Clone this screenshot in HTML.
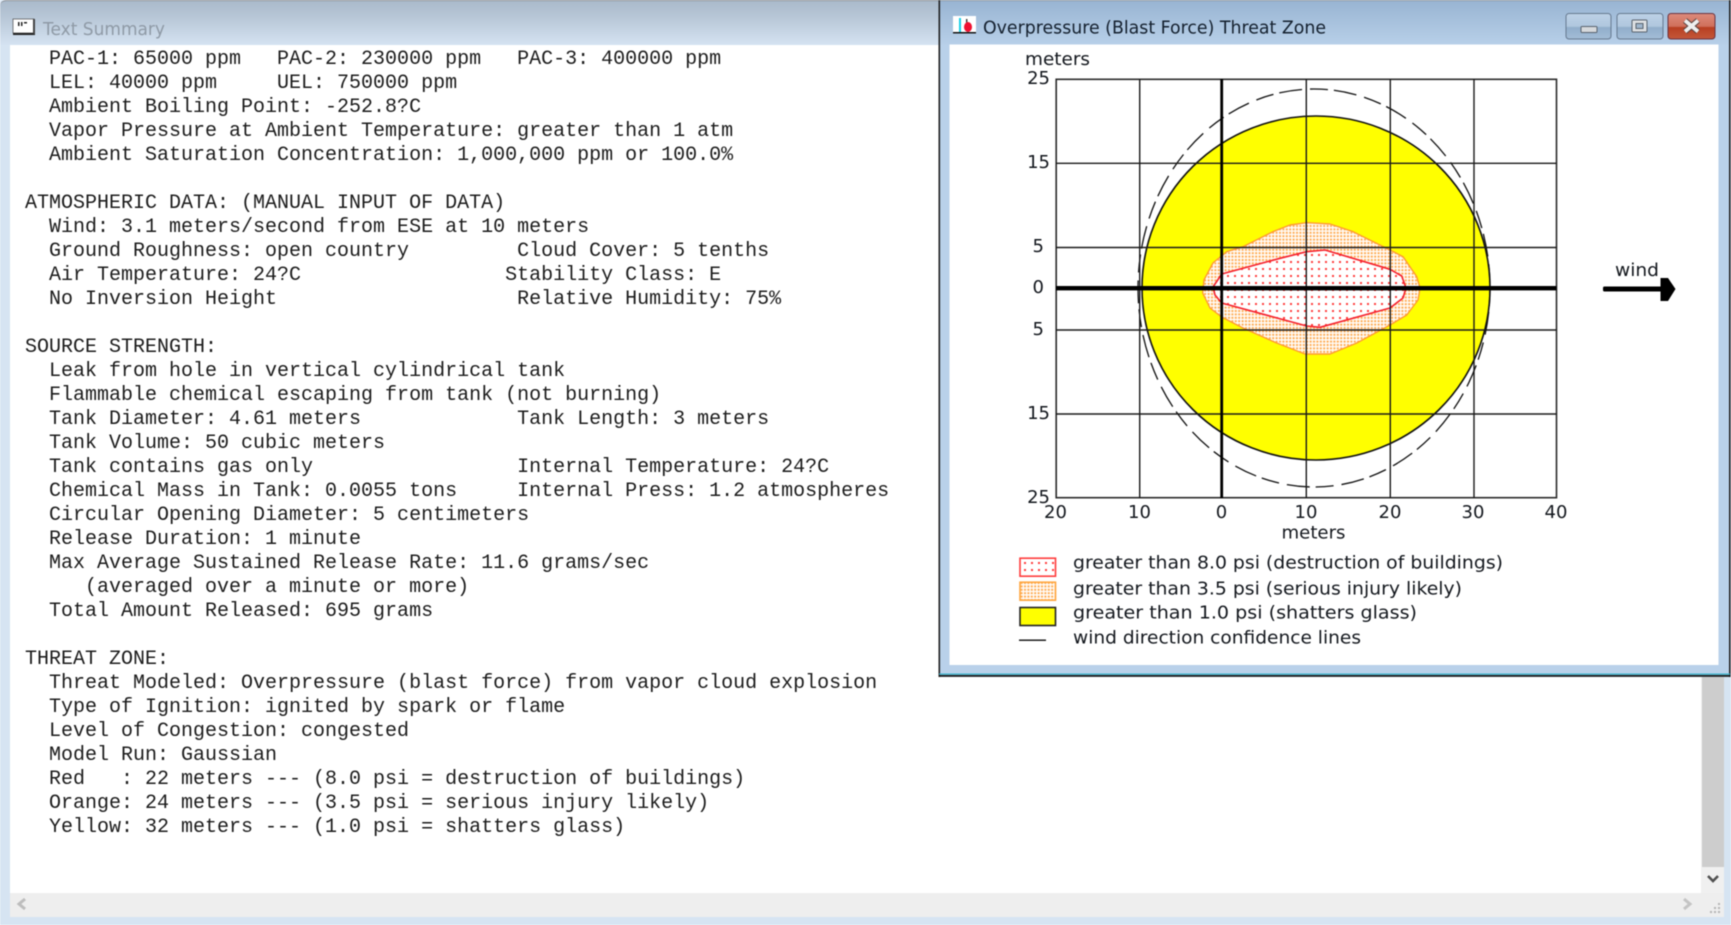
<!DOCTYPE html>
<html>
<head>
<meta charset="utf-8">
<title>Overpressure Threat Zone</title>
<style>
html,body{margin:0;padding:0;background:#fff}
#root{position:relative;width:1731px;height:925px;overflow:hidden;background:#d6e4f2;filter:blur(.45px)}
.abs{position:absolute}
#lt{left:0;top:0;width:945px;height:45px;background:linear-gradient(#aabacb 0,#b9c8d8 40%,#d5e3f2 100%);border-top:1px solid #8a8f95;box-sizing:border-box;border-top-left-radius:6px}
#client{left:10px;top:45px;width:1691px;height:848px;background:#fff}
pre{position:absolute;left:25px;top:47.7px;margin:0;font:20px/24px "Liberation Mono",monospace;color:#1c1c1c}
#hs{left:10px;top:893px;width:1714px;height:24px;background:#eeeeee}
#vs{left:1701px;top:677px;width:23px;height:216px;background:#f0f0f0}
#thumb{left:1702px;top:677px;width:22px;height:190px;background:#cdcdcd}
</style>
</head>
<body>
<div id="root">
  <div class="abs" id="lt"></div>
  <div class="abs" id="client"></div>
  <pre>  PAC-1: 65000 ppm   PAC-2: 230000 ppm   PAC-3: 400000 ppm
  LEL: 40000 ppm     UEL: 750000 ppm
  Ambient Boiling Point: -252.8?C
  Vapor Pressure at Ambient Temperature: greater than 1 atm
  Ambient Saturation Concentration: 1,000,000 ppm or 100.0%

ATMOSPHERIC DATA: (MANUAL INPUT OF DATA)
  Wind: 3.1 meters/second from ESE at 10 meters
  Ground Roughness: open country         Cloud Cover: 5 tenths
  Air Temperature: 24?C                 Stability Class: E
  No Inversion Height                    Relative Humidity: 75%

SOURCE STRENGTH:
  Leak from hole in vertical cylindrical tank
  Flammable chemical escaping from tank (not burning)
  Tank Diameter: 4.61 meters             Tank Length: 3 meters
  Tank Volume: 50 cubic meters
  Tank contains gas only                 Internal Temperature: 24?C
  Chemical Mass in Tank: 0.0055 tons     Internal Press: 1.2 atmospheres
  Circular Opening Diameter: 5 centimeters
  Release Duration: 1 minute
  Max Average Sustained Release Rate: 11.6 grams/sec
     (averaged over a minute or more)
  Total Amount Released: 695 grams

THREAT ZONE:
  Threat Modeled: Overpressure (blast force) from vapor cloud explosion
  Type of Ignition: ignited by spark or flame
  Level of Congestion: congested
  Model Run: Gaussian
  Red   : 22 meters --- (8.0 psi = destruction of buildings)
  Orange: 24 meters --- (3.5 psi = serious injury likely)
  Yellow: 32 meters --- (1.0 psi = shatters glass)</pre>
  <div class="abs" id="hs"></div>
  <div class="abs" id="vs"></div>
  <div class="abs" id="thumb"></div>

  <svg class="abs" style="left:0;top:0" width="1731" height="925" viewBox="0 0 1731 925" xmlns="http://www.w3.org/2000/svg">
    <defs>
      <linearGradient id="tb" x1="0" y1="0" x2="0" y2="1"><stop offset="0" stop-color="#98b4d2"/><stop offset="1" stop-color="#b8d0e9"/></linearGradient>
      <linearGradient id="bn" x1="0" y1="0" x2="0" y2="1"><stop offset="0" stop-color="#bdd1e6"/><stop offset=".5" stop-color="#b0c7de"/><stop offset=".55" stop-color="#91aecb"/><stop offset="1" stop-color="#a3bdd7"/></linearGradient>
      <linearGradient id="cl" x1="0" y1="0" x2="0" y2="1"><stop offset="0" stop-color="#dc8a7c"/><stop offset=".5" stop-color="#d0705c"/><stop offset=".55" stop-color="#b83f22"/><stop offset="1" stop-color="#c4573a"/></linearGradient>
      <pattern id="pr" patternUnits="userSpaceOnUse" width="7" height="7"><rect width="7" height="7" fill="#fff"/><rect x="2" y="2" width="2" height="2" fill="#ff3c3c"/></pattern>
      <pattern id="po" patternUnits="userSpaceOnUse" width="3.4" height="3.4"><rect width="3.4" height="3.4" fill="#fff"/><rect x=".6" y=".6" width="2" height="2" fill="#ffa94d"/></pattern>
    </defs>

    <!-- left window bits -->
    <g>
      <rect x="13" y="19" width="21" height="14" fill="#fff" stroke="#333" stroke-width=".6"/>
      <rect x="13" y="33" width="22" height="2" fill="#222"/>
      <rect x="33" y="19" width="2" height="15" fill="#444"/>
      <rect x="18" y="22" width="1.5" height="4" fill="#222"/><rect x="21" y="22" width="1.5" height="4" fill="#222"/><rect x="24" y="22" width="3" height="1.5" fill="#222"/>
      <text x="43" y="35" font-family="'DejaVu Sans',sans-serif" font-size="18" fill="#8f9aa6" textLength="122" lengthAdjust="spacingAndGlyphs">Text Summary</text>
    </g>
    <!-- scrollbar glyphs -->
    <path d="M25 899l-6 5 6 5" fill="none" stroke="#bdbdbd" stroke-width="3"/>
    <path d="M1684 899l6 5-6 5" fill="none" stroke="#c4c4c4" stroke-width="3"/>
    <path d="M1708 876l5 5 5-5" fill="none" stroke="#505050" stroke-width="2.6"/>
    <g fill="#b4b4b4"><rect x="1718" y="903" width="2" height="2"/><rect x="1714" y="907" width="2" height="2"/><rect x="1718" y="907" width="2" height="2"/><rect x="1710" y="911" width="2" height="2"/><rect x="1714" y="911" width="2" height="2"/><rect x="1718" y="911" width="2" height="2"/></g>

    <!-- right window frame -->
    <rect x="939" y="0" width="792" height="677" fill="#b9d1ea"/>
    <rect x="939" y="0" width="792" height="45" fill="url(#tb)"/>
    <rect x="939" y="0" width="792" height="1" fill="#8b96a1"/>
    <rect x="938.5" y="0" width="1.6" height="677" fill="#222"/>
    <rect x="1729" y="0" width="1.6" height="677" fill="#222"/>
    <rect x="939" y="673.5" width="791" height="1.2" fill="#33b0c8"/>
    <rect x="939" y="675" width="791" height="1.8" fill="#1a1a1a"/>
    <rect x="949.5" y="44.5" width="769" height="620.5" fill="#fff"/>

    <!-- title -->
    <rect x="953" y="16" width="23" height="16" fill="#fff"/>
    <rect x="953" y="32" width="23" height="1.5" fill="#111"/>
    <rect x="959" y="18" width="2" height="14" fill="#18d0e8"/>
    <rect x="966" y="19" width="1.4" height="6" fill="#333"/>
    <ellipse cx="968" cy="27" rx="4" ry="5" fill="#f01030"/>
    <text x="983" y="33.5" font-family="'DejaVu Sans',sans-serif" font-size="18" fill="#14202e" textLength="343" lengthAdjust="spacingAndGlyphs">Overpressure (Blast Force) Threat Zone</text>

    <!-- buttons -->
    <rect x="1566" y="13.5" width="45" height="25.5" rx="3" fill="url(#bn)" stroke="#66798f" stroke-width="1"/>
    <rect x="1581" y="26.5" width="16" height="6" rx="1" fill="#d6d9dc" stroke="#59636e" stroke-width="1"/>
    <rect x="1617" y="13.5" width="46" height="25.5" rx="3" fill="url(#bn)" stroke="#66798f" stroke-width="1"/>
    <rect x="1632" y="20" width="15" height="12" rx="1" fill="#dde0e3" stroke="#59636e" stroke-width="1"/>
    <rect x="1636" y="23.5" width="7" height="5" fill="#9fb6cd" stroke="#59636e" stroke-width="1"/>
    <rect x="1668" y="13.5" width="47" height="25.5" rx="3" fill="url(#cl)" stroke="#6b3340" stroke-width="1"/>
    <path d="M1685 20.5l13 11M1698 20.5l-13 11" stroke="#59423f" stroke-width="6"/>
    <path d="M1685 20.5l13 11M1698 20.5l-13 11" stroke="#eeeeee" stroke-width="3.8"/>

    <!-- plot -->
    <ellipse cx="1316" cy="288" rx="174" ry="172" fill="#ffff00" stroke="#111" stroke-width="1.6"/>
    <ellipse cx="1314" cy="288" rx="176" ry="199" fill="none" stroke="#111" stroke-width="1.3" stroke-dasharray="18 6 23 8"/>
    <path d="M1306.7 222.7L1330 224 1353 231.7 1390 250 1403 256.7 1416.7 276.7 1420 288 1418 300 1406.7 315 1390 325 1356.7 343 1330 354 1305 354 1276.7 343 1243 328 1221.7 317 1210 308 1202.7 293 1204 280 1213 263 1226.7 251.7 1243 246.7 1273 231.7 1290 225Z" fill="url(#po)" stroke="#ff9a30" stroke-width="1.4" stroke-linejoin="round"/>
    <path d="M1306.7 251.7L1325 250 1390 269.3 1401.7 276 1406 288 1403 298 1390 308 1320 327.3 1306.7 326 1221.7 303 1215 295 1213 287 1221.7 274 1280 258.3Z" fill="url(#pr)" stroke="#f5202c" stroke-width="1.6" stroke-linejoin="round"/>

    <g stroke="#1a1a1a" stroke-width="1.4" fill="none">
      <rect x="1056.2" y="79.3" width="500.3" height="418.4" stroke="#2b2b2b" stroke-width="1.6"/>
      <path d="M1139.7 79.3V497.7M1306.3 79.3V497.7M1390.3 79.3V497.7M1474 79.3V497.7"/>
      <path d="M1056.2 163.3H1556.5M1056.2 247.5H1556.5M1056.2 330H1556.5M1056.2 414H1556.5"/>
    </g>
    <rect x="1220.3" y="79" width="2.8" height="419" fill="#000"/>
    <rect x="1056" y="286" width="500.5" height="4.4" fill="#000"/>

    <g font-family="'DejaVu Sans',sans-serif" font-size="18" fill="#14181e">
      <text x="1025" y="65" textLength="65" lengthAdjust="spacingAndGlyphs">meters</text>
      <g text-anchor="end">
        <text x="1050" y="84">25</text>
        <text x="1050" y="168">15</text>
        <text x="1044" y="252">5</text>
        <text x="1044" y="293">0</text>
        <text x="1044" y="335">5</text>
        <text x="1050" y="419">15</text>
        <text x="1050" y="503">25</text>
      </g>
      <g text-anchor="middle">
        <text x="1055.5" y="518">20</text>
        <text x="1139.5" y="518">10</text>
        <text x="1221.5" y="518">0</text>
        <text x="1306" y="518">10</text>
        <text x="1390" y="518">20</text>
        <text x="1473" y="518">30</text>
        <text x="1556" y="518">40</text>
      </g>
      <text x="1281.5" y="538.5" textLength="64" lengthAdjust="spacingAndGlyphs">meters</text>
      <text x="1615" y="276" textLength="44" lengthAdjust="spacingAndGlyphs">wind</text>
      <text x="1073" y="568.5" textLength="430" lengthAdjust="spacingAndGlyphs">greater than 8.0 psi (destruction of buildings)</text>
      <text x="1073" y="594.5" textLength="389" lengthAdjust="spacingAndGlyphs">greater than 3.5 psi (serious injury likely)</text>
      <text x="1073" y="618.5" textLength="344" lengthAdjust="spacingAndGlyphs">greater than 1.0 psi (shatters glass)</text>
      <text x="1073" y="643.5" textLength="288" lengthAdjust="spacingAndGlyphs">wind direction confidence lines</text>
    </g>

    <!-- wind arrow -->
    <rect x="1603" y="286.5" width="60" height="5" rx="1.5" fill="#000"/>
    <path d="M1660.5 278L1668 278 1675.5 289 1668 301 1660.5 301Z" fill="#000"/>

    <!-- legend -->
    <rect x="1020" y="558.2" width="35.5" height="18" fill="url(#pr)" stroke="#ff3c3c" stroke-width="1.6"/>
    <rect x="1020" y="582.2" width="35.5" height="18" fill="url(#po)" stroke="#ffa63f" stroke-width="1.6"/>
    <rect x="1020" y="607.5" width="35.5" height="18" fill="#ffff00" stroke="#222" stroke-width="1.6"/>
    <rect x="1019" y="639.5" width="27" height="1.4" fill="#111"/>
  </svg>
</div>
</body>
</html>
